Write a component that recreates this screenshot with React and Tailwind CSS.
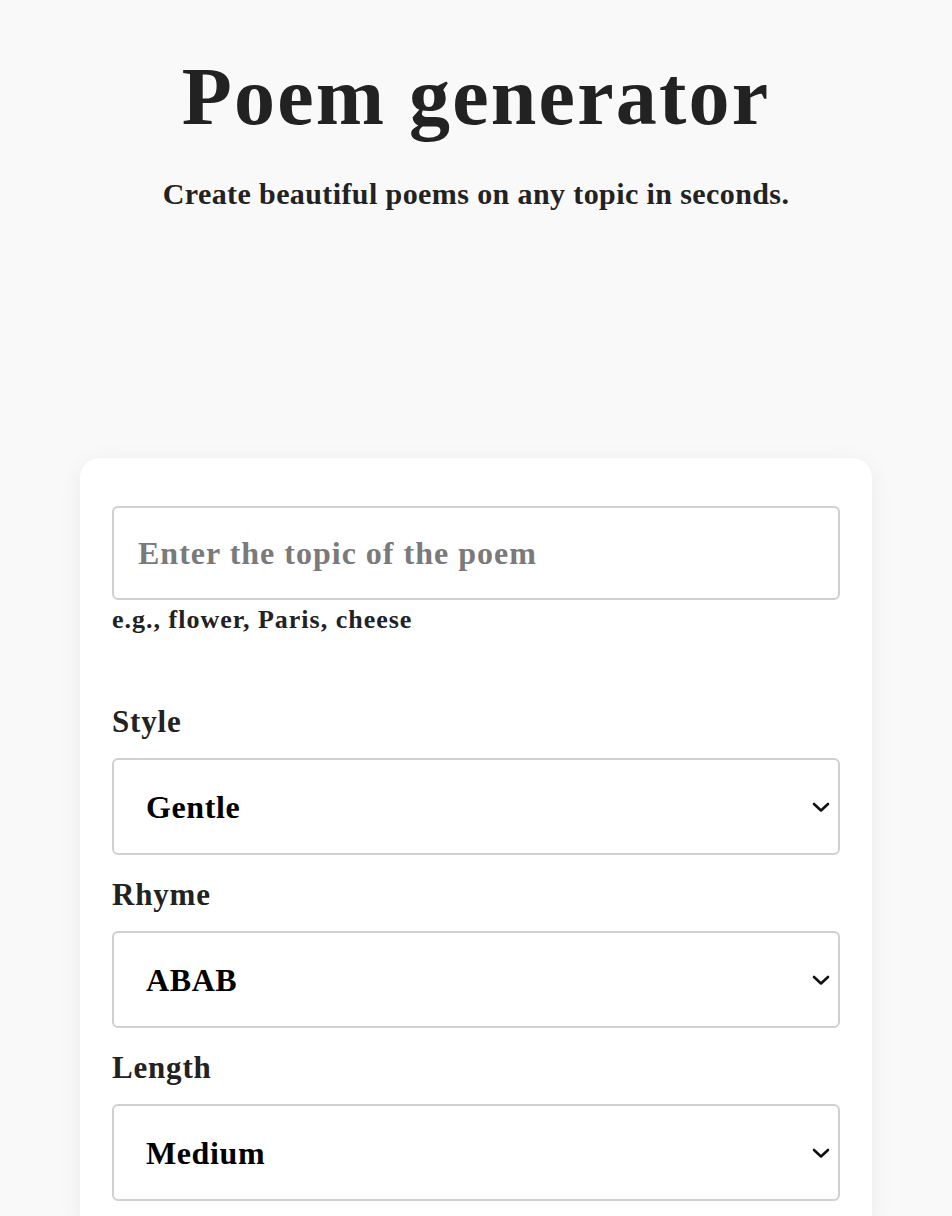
import React from "react";

const serif = { fontFamily: '"Liberation Serif", "DejaVu Serif", serif' };

function Chevron() {
  return (
    <svg
      className="pointer-events-none absolute right-[10px] top-1/2 -translate-y-1/2"
      width="18"
      height="12"
      viewBox="0 0 18 12"
      fill="none"
    >
      <path d="M2 3 L9 9.5 L16 3" stroke="#111" strokeWidth="2.6" strokeLinecap="round" strokeLinejoin="round" />
    </svg>
  );
}

function SelectField({ label, value, options }) {
  return (
    <div className="flex flex-col">
      <label className="text-[31px] leading-[36px] font-bold tracking-[0.8px] text-[#222] mb-[18px]">{label}</label>
      <div className="relative">
        <select
          defaultValue={value}
          className="block w-full h-[97px] appearance-none rounded-[6px] border-2 border-[#d0d0d0] bg-white pl-[32px] pr-10 text-[32px] font-bold tracking-[0.6px] text-black outline-none"
          style={serif}
        >
          {options.map((o) => (
            <option key={o}>{o}</option>
          ))}
        </select>
        <Chevron />
      </div>
    </div>
  );
}

export default function App() {
  return (
    <div className="min-h-[1216px] w-full bg-[#f9f9f9] text-[#222]" style={serif}>
      <header className="flex flex-col items-center pt-[57px]">
        <h1 className="text-[82px] leading-[80px] font-bold tracking-[2.2px] text-[#222]">Poem generator</h1>
        <p className="mt-[43px] text-[30px] leading-[28px] font-bold tracking-[0.4px] text-[#222]">
          Create beautiful poems on any topic in seconds.
        </p>
      </header>
      <main className="px-[80px] pt-[250px]">
        <div className="rounded-[20px] bg-white px-[32px] pt-[48px] pb-[40px] shadow-[0_4px_24px_rgba(0,0,0,0.06)]">
          <input
            type="text"
            placeholder="Enter the topic of the poem"
            className="block w-full h-[94px] rounded-[6px] border-2 border-[#d0d0d0] bg-white px-[24px] text-[32px] font-bold tracking-[1px] text-[#222] placeholder:text-[#7a7a7a] outline-none"
            style={serif}
          />
          <p className="mt-[2px] text-[26px] leading-[36px] font-bold tracking-[1px] text-[#222]">e.g., flower, Paris, cheese</p>
          <div className="mt-[66px] flex flex-col gap-[22px]">
            <SelectField label="Style" value="Gentle" options={["Gentle", "Joyful", "Melancholic"]} />
            <SelectField label="Rhyme" value="ABAB" options={["ABAB", "AABB", "Free verse"]} />
            <SelectField label="Length" value="Medium" options={["Short", "Medium", "Long"]} />
          </div>
        </div>
      </main>
    </div>
  );
}
